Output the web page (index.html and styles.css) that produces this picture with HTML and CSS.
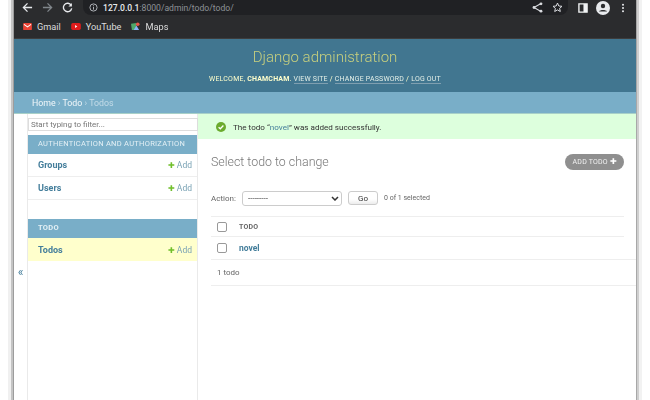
FILE: index.html
```html
<!DOCTYPE html>
<html lang="en">
<head>
<meta charset="utf-8">
<title>Select todo to change</title>
<link rel="stylesheet" href="styles.css">
</head>
<body>
<div class="window">
  <div class="toolbar">
    <svg class="tb-icon" width="11" height="11" viewBox="0 0 12 12"><path d="M11 6H2M6 1.5L1.5 6 6 10.5" fill="none" stroke="#e8eaed" stroke-width="1.4"/></svg>
    <svg class="tb-icon" width="11" height="11" viewBox="0 0 12 12"><path d="M1 6h9M6 1.5L10.5 6 6 10.5" fill="none" stroke="#80868b" stroke-width="1.4"/></svg>
    <svg class="tb-icon" width="11" height="11" viewBox="0 0 12 12"><path d="M10 3.5A4.6 4.6 0 1 0 10.6 7" fill="none" stroke="#e8eaed" stroke-width="1.5"/><path d="M10.8 1v3.8H7z" fill="#e8eaed"/></svg>
    <div class="omnibox">
      <svg width="9" height="9" viewBox="0 0 10 10"><circle cx="5" cy="5" r="4" fill="none" stroke="#bdc1c6"/><path d="M5 4.4v3M5 2.6v1" stroke="#bdc1c6"/></svg>
      <span class="url"><b>127.0.0.1</b>:8000/admin/todo/todo/</span>
      <span class="spacer"></span>
      <svg width="11" height="11" viewBox="0 0 11 11"><path d="M9 1.5L2 5.5 9 9.5" fill="none" stroke="#dadce0" stroke-width="1.1"/><circle cx="9" cy="1.8" r="1.4" fill="#dadce0"/><circle cx="2" cy="5.5" r="1.4" fill="#dadce0"/><circle cx="9" cy="9.2" r="1.4" fill="#dadce0"/></svg>
      <svg class="star" width="11" height="11" viewBox="0 0 11 11"><path d="M5.5 1l1.3 3 3.2.3-2.4 2.1.7 3.1-2.8-1.6-2.8 1.6.7-3.1L1 4.3 4.2 4z" fill="none" stroke="#dadce0"/></svg>
    </div>
    <svg class="tb-panel" width="10" height="10" viewBox="0 0 11 11"><path d="M1 1h9v9H1z" fill="none" stroke="#f1f3f4" stroke-width="1.5"/><path d="M6 1h4v9H6z" fill="#f1f3f4"/></svg>
    <svg class="tb-avatar" width="14" height="14" viewBox="0 0 14 14"><circle cx="7" cy="7" r="7" fill="#e8eaed"/><circle cx="7" cy="5" r="2.2" fill="#2b2c2e"/><path d="M3 10.5c1-2 7-2 8 0z" fill="#2b2c2e"/></svg>
    <svg class="tb-dots" width="4" height="10" viewBox="0 0 4 12"><circle cx="2" cy="2" r="1.2" fill="#e8eaed"/><circle cx="2" cy="6" r="1.2" fill="#e8eaed"/><circle cx="2" cy="10" r="1.2" fill="#e8eaed"/></svg>
  </div>
  <div class="bookmarks">
    <span class="bm"><svg width="9" height="7" viewBox="0 0 10 8"><rect width="10" height="8" rx="1" fill="#ea4335"/><path d="M1 1.5l4 3 4-3" fill="none" stroke="#fff" stroke-width="1.2"/></svg>Gmail</span>
    <span class="bm"><svg width="10" height="7" viewBox="0 0 11 8"><rect width="11" height="8" rx="2" fill="#e01b1b"/><path d="M4.5 2.4v3.2L7 4z" fill="#fff"/></svg>YouTube</span>
    <span class="bm"><svg width="9" height="9" viewBox="0 0 10 10"><path d="M0 2l6-1v8H1z" fill="#4fa86a"/><path d="M3 9L6 4l3 5z" fill="#8ab4f8"/><circle cx="7.5" cy="2.5" r="2" fill="#e8564a"/></svg>Maps</span>
  </div>
  <header class="site-header">
    <h1 class="brand">Django administration</h1>
    <div class="user-tools">WELCOME, <strong>CHAMCHAM</strong>. <a class="tool">VIEW SITE</a> / <a class="tool">CHANGE PASSWORD</a> / <a class="tool">LOG OUT</a></div>
  </header>
  <div class="crumbs"><span>Home</span> › <span>Todo</span> › <span class="crumb-now">Todos</span></div>
  <div class="body-row">
    <div class="toggle-col"><span class="toggle">«</span></div>
    <aside class="sidebar">
      <input class="filter" placeholder="Start typing to filter...">
      <div class="caption">AUTHENTICATION AND AUTHORIZATION</div>
      <div class="model"><span class="m-name">Groups</span><span class="m-add"><i class="plus">✚</i> Add</span></div>
      <div class="model"><span class="m-name">Users</span><span class="m-add"><i class="plus">✚</i> Add</span></div>
      <div class="caption todo-cap"><b>TODO</b></div>
      <div class="model current"><span class="m-name">Todos</span><span class="m-add"><i class="plus">✚</i> Add</span></div>
    </aside>
    <main class="main">
      <div class="message">
        <svg width="10" height="10" viewBox="0 0 10 10"><circle cx="5" cy="5" r="5" fill="#6bab2e"/><path d="M2.6 5.2l1.7 1.6 3.1-3.3" fill="none" stroke="#fff" stroke-width="1.3"/></svg>
        <span>The todo “<a class="msg-link">novel</a>” was added successfully.</span>
      </div>
      <div class="content">
        <div class="title-row">
          <h2 class="title">Select todo to change</h2>
          <span class="add-btn">ADD TODO <i class="add-plus">✚</i></span>
        </div>
        <div class="actions">
          <label>Action:</label>
          <div class="select"><span>---------</span><svg width="8" height="5" viewBox="0 0 8 5"><path d="M1 1l3 3 3-3" fill="none" stroke="#333" stroke-width="1.5"/></svg></div>
          <span class="go">Go</span>
          <span class="count">0 of 1 selected</span>
        </div>
        <div class="row head"><span class="box"></span><span class="col-head">TODO</span></div>
        <div class="row item"><span class="box"></span><a class="novel">novel</a></div>
        <div class="total">1 todo</div>
      </div>
    </main>
  </div>
</div>
</body>
</html>
```
FILE: styles.css
```css
html, body { margin: 0; height: 400px; overflow: hidden; background: #fff; }
body { padding: 0 14px 0 14px; box-sizing: border-box; font-family: Roboto, "Liberation Sans", sans-serif; }
.window {
  height: 400px; display: flex; flex-direction: column; background: #fff;
  box-shadow: -1px 0 0 #9c9c9c, -3px 0 0 #c4c4c4, -6px 0 0 #f0f0f0, 1px 0 0 #a8a8a8, 3px 0 0 #cfcfcf, 6px 0 0 #f2f2f2;
  filter: blur(0.5px);
}
.toolbar { height: 15px; flex: none; background: #2b2c2e; display: flex; align-items: center; padding: 0 11px 0 8px; gap: 9px; }
.tb-icon { flex: none; }
.omnibox { flex: 1; height: 15px; margin-left: 1px; padding: 0 5px 0 6px; background: #202124; border-radius: 0 0 8px 8px; display: flex; align-items: center; gap: 5px; }
.url { font-size: 8.6px; color: #8d9296; }
.url b { color: #e8eaed; font-weight: 500; }
.spacer { flex: 1; }
.star { margin-left: 4px; }
.tb-panel { flex: none; margin-left: 1px; }
.tb-avatar { flex: none; margin-left: -1px; }
.tb-dots { flex: none; margin-left: 2px; }
.bookmarks { height: 24px; flex: none; background: #2b2c2e; display: flex; align-items: center; gap: 10px; padding-left: 9px; border-bottom: 1px solid #3d3d3d; box-sizing: border-box; }
.bm { display: flex; align-items: center; gap: 5px; color: #dcdcdc; font-size: 9.2px; }
.site-header { height: 53px; flex: none; background: #417690; text-align: center; box-sizing: border-box; padding-top: 8px; }
.brand { margin: 0; font-size: 15px; line-height: 20px; font-weight: 300; color: #c8d07e; }
.user-tools { margin-top: 7px; font-size: 7px; line-height: 11px; letter-spacing: .2px; color: #ffc; }
.user-tools strong { font-weight: 700; }
.tool { color: #e4f0e8; border-bottom: 1px solid #7f9fb0; }
.crumbs { height: 22px; flex: none; background: #79aec8; color: #c4dce8; font-size: 8.8px; line-height: 22px; padding-left: 18px; border-bottom: 1px solid #a8d0c8; box-sizing: border-box; }
.crumbs span { color: #f1f7fa; }
.crumbs .crumb-now { color: #c4dce8; }
.body-row { flex: 1; display: flex; min-height: 0; }
.toggle-col { width: 14px; flex: none; display: flex; align-items: flex-start; justify-content: center; padding-top: 152px; box-sizing: border-box; border-right: 1px solid #eaeaea; }
.toggle { color: #447e9b; font-size: 12px; line-height: 12px; }
.sidebar { width: 170px; flex: none; border-right: 1px solid #eaeaea; box-sizing: border-box; display: flex; flex-direction: column; padding-top: 4px; }
.filter { height: 13px; width: 170px; flex: none; box-sizing: border-box; border: 1px solid #ddd; padding: 0 2px; font: 8px Roboto, sans-serif; margin: 0 0 4px; outline: 0; }
.filter::placeholder { color: #777; opacity: 1; }
.caption { height: 19px; flex: none; background: #79aec8; color: #e4f0f5; font-size: 7.5px; letter-spacing: .28px; line-height: 18px; padding-left: 10px; }
.todo-cap { margin-top: 19px; height: 19px; }
.model { height: 23px; flex: none; box-sizing: border-box; display: flex; justify-content: space-between; align-items: center; padding: 0 5px 0 10px; border-bottom: 1px solid #eee; font-size: 9px; }
.current { height: 23px; background: #ffc; border-bottom: 0; }
.m-name { color: #447e9b; font-weight: 700; }
.m-add { color: #7ba3b5; font-size: 8.5px; }
.plus { color: #70bf2b; font-style: normal; font-size: 8px; }
.main { flex: 1; min-width: 0; display: flex; flex-direction: column; }
.message { height: 25px; flex: none; box-sizing: border-box; background: #dfd; display: flex; align-items: center; gap: 7px; padding-left: 18px; font-size: 8.1px; color: #333; }
.msg-link { color: #447e9b; }
.content { padding: 0 12px 0 13px; }
.title-row { display: flex; justify-content: space-between; align-items: center; padding-top: 14px; }
.title { margin: 0; font-size: 12.4px; line-height: 18px; font-weight: 300; color: #777; }
.add-btn { height: 16px; padding: 0 7px 0 8px; border-radius: 8px; background: #8f8f8f; color: #f2f2f2; font-size: 7px; letter-spacing: .2px; line-height: 16px; }
.add-plus { font-style: normal; font-size: 8px; color: #fff; }
.actions { display: flex; align-items: center; height: 16px; margin-top: 19px; font-size: 8px; color: #666; }
.actions label { width: 31px; flex: none; }
.select { width: 100px; height: 15px; box-sizing: border-box; border: 1px solid #ccc; border-radius: 3px; display: flex; justify-content: space-between; align-items: center; padding: 0 2px 0 5px; color: #333; }
.go { width: 30px; height: 14px; margin-left: 6px; box-sizing: border-box; border: 1px solid #ccc; border-radius: 3px; background: linear-gradient(#fff 60%, #ececec); text-align: center; line-height: 13px; color: #333; }
.count { margin-left: 6px; font-size: 7px; }
.row { display: flex; align-items: center; border-top: 1px solid #eee; box-sizing: border-box; }
.head { height: 20px; margin-top: 10px; }
.item { height: 23px; }
.box { width: 8px; height: 8px; flex: none; margin: 0 12px 0 6px; border: 1px solid #999; border-radius: 2px; }
.col-head { color: #666; font-size: 7px; font-weight: 700; letter-spacing: .2px; }
.novel { color: #447e9b; font-weight: 700; font-size: 8.5px; }
.total { height: 27px; box-sizing: border-box; border-top: 1px solid #eee; border-bottom: 1px solid #eee; padding-left: 6px; font-size: 8px; line-height: 25px; color: #666; margin-right: -12px; }
```
